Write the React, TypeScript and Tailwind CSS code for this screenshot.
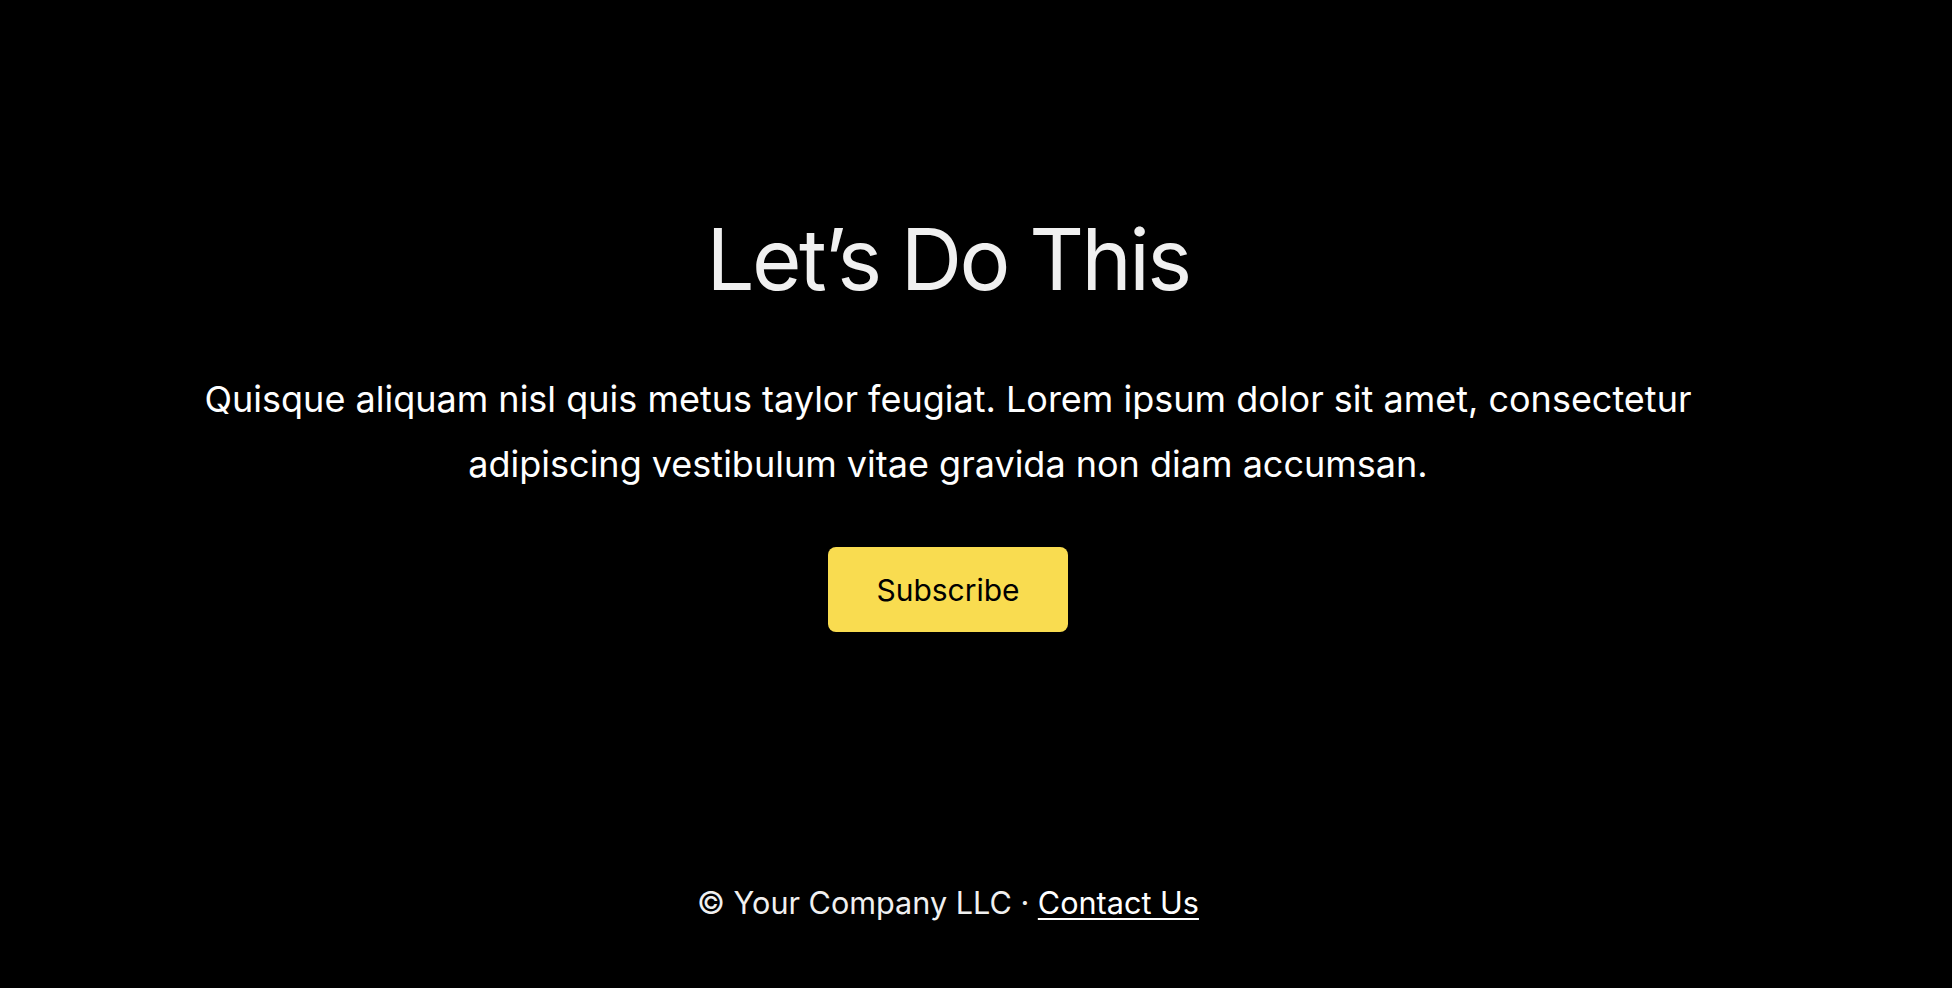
const App = () => {
  return (
    <main
      className="min-h-screen bg-black flex flex-col items-center pr-14 text-white"
      style={{ fontFamily: "Inter, 'Noto Sans', sans-serif" }}
    >
      <section className="flex flex-col items-center pt-[217px] text-center">
        <h1 className="text-[85px] leading-none font-normal text-[#f0f0f0] tracking-[-2.6px]">
          Let’s Do This
        </h1>
        <p className="mt-[65px] max-w-[1560px] text-[36px] leading-[65px] text-white">
          Quisque aliquam nisl quis metus taylor feugiat. Lorem ipsum dolor sit
          amet, consectetur adipiscing vestibulum vitae gravida non diam
          accumsan.
        </p>
        <button className="mt-[50px] h-[85px] px-12 rounded-lg bg-[#f9dc50] text-black text-[30px] leading-none">
          Subscribe
        </button>
      </section>
      <footer className="mt-[256px] text-[30.6px] leading-none text-[#f0f0f0]">
        © Your Company LLC ·{" "}
        <a href="#" className="underline underline-offset-4 decoration-2 text-white">
          Contact Us
        </a>
      </footer>
    </main>
  );
};

export default App;
